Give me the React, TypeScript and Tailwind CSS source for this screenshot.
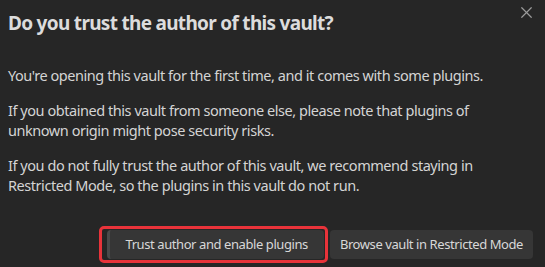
import { X } from "lucide-react";

export default function App() {
  return (
    <div
      className="relative w-[545px] h-[267px] bg-[#262626] text-[#d4d4d4] overflow-hidden"
      style={{ fontFamily: '"Noto Sans", "Open Sans", sans-serif' }}
    >
      <button className="absolute right-[9px] top-[3px] text-[#9a9a9a]">
        <X className="w-[19px] h-[19px]" strokeWidth={1.5} />
      </button>

      <div className="px-2 pt-[9px]">
        <h1 className="text-[19px] leading-[28px] font-bold text-[#dcdcdc] tracking-[-0.7px]">
          Do you trust the author of this vault?
        </h1>

        <div className="mt-[28px] text-[14.5px] leading-[20px] tracking-[-0.45px] space-y-[15px]">
          <p>You're opening this vault for the first time, and it comes with some plugins.</p>
          <p>
            If you obtained this vault from someone else, please note that plugins of
            <br />
            unknown origin might pose security risks.
          </p>
          <p>
            If you do not fully trust the author of this vault, we recommend staying in
            <br />
            Restricted Mode, so the plugins in this vault do not run.
          </p>
        </div>
      </div>

      <div className="flex justify-end gap-[2px] pr-3 mt-[31px]">
        <div className="rounded-[5px] border-[3px] border-[#e8333a] py-[1px] pl-[5px] pr-[1px]">
          <button className="h-[29px] px-[16px] rounded-[4px] bg-[#363636] border-l-[3px] border-[#4a4a4a] text-[13px] text-[#d8d8d8] tracking-[-0.42px]">
            Trust author and enable plugins
          </button>
        </div>
        <div className="py-[4px]">
          <button className="h-[29px] px-[10px] rounded-[4px] bg-[#363636] text-[13px] text-[#d8d8d8] tracking-[-0.42px]">
            Browse vault in Restricted Mode
          </button>
        </div>
      </div>
    </div>
  );
}
